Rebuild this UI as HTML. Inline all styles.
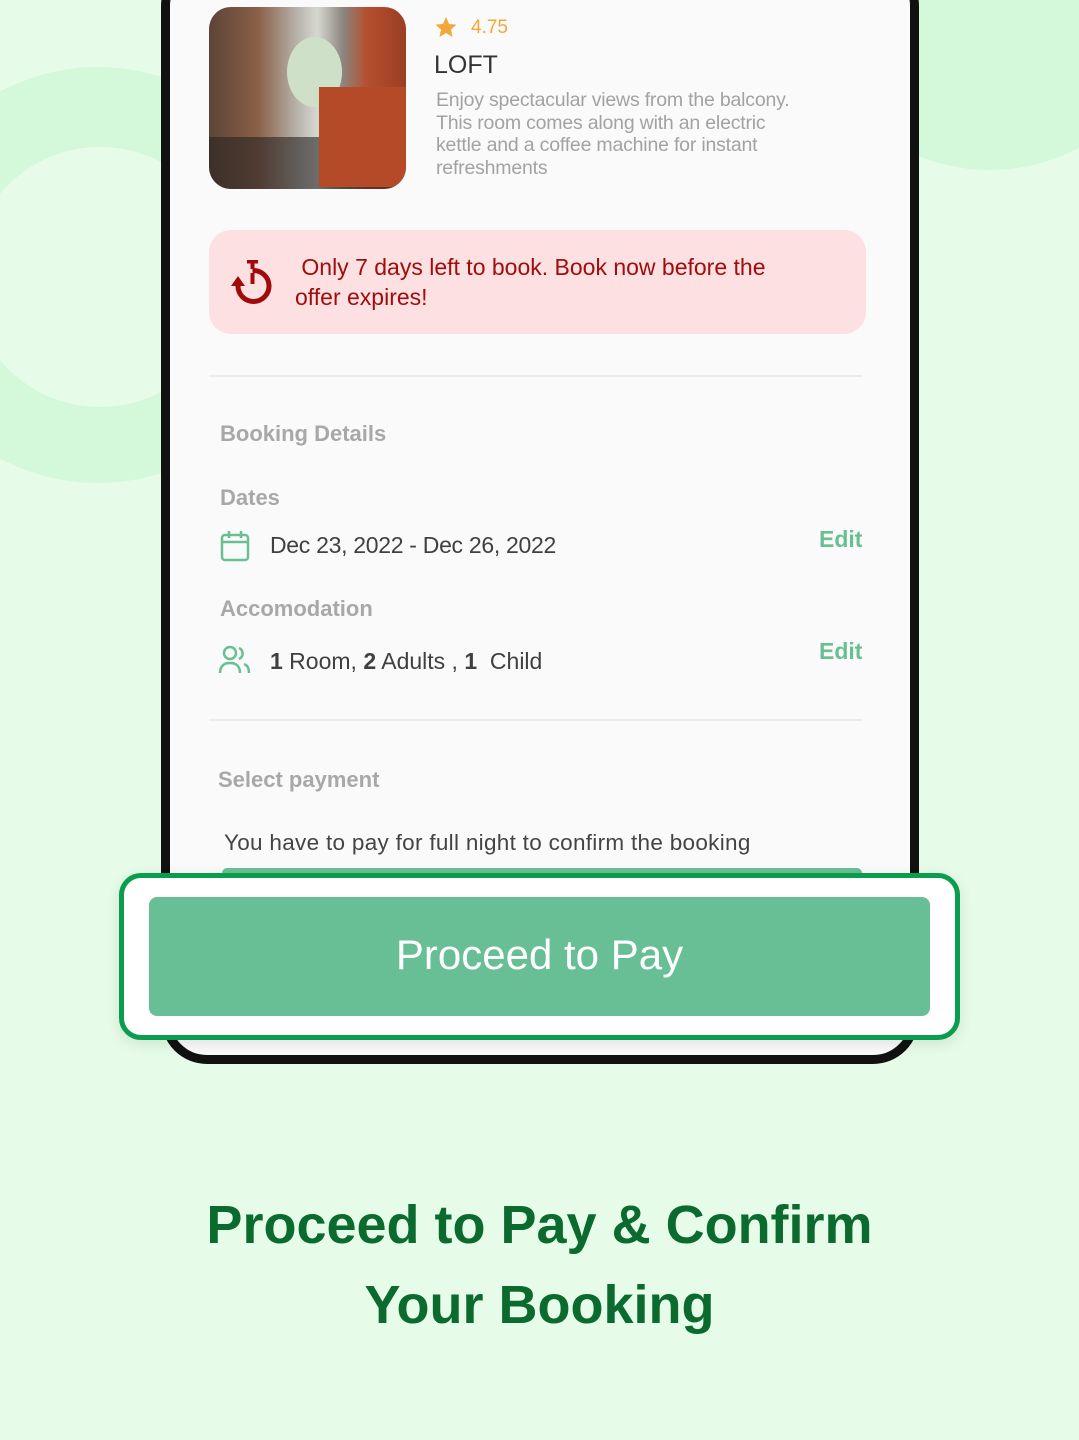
<!DOCTYPE html>
<html><head><meta charset="utf-8"><style>
*{margin:0;padding:0;box-sizing:border-box}
body{width:1079px;height:1440px;background:#e6fce9;position:relative;overflow:hidden;font-family:"Liberation Sans",sans-serif}
.a{position:absolute}
.t{position:absolute;white-space:nowrap}
</style></head><body>
<div class="a" style="left:-110px;top:67px;width:416px;height:416px;border-radius:50%;background:#d3f9da"></div>
<div class="a" style="left:-30px;top:147px;width:260px;height:260px;border-radius:50%;background:#e6fce9"></div>
<div class="a" style="left:800px;top:-210px;width:380px;height:380px;border-radius:50%;background:#d3f9da"></div>
<div class="a" style="left:161px;top:-40px;width:758px;height:1104px;border:9px solid #111;border-radius:46px;background:#fafafa"></div>

<div class="a" style="left:209px;top:7px;width:197px;height:182px;border-radius:22px;background:linear-gradient(90deg,#5c4436 0%,#8a6048 25%,#b8b4ad 45%,#d6d8d0 55%,#8b8580 68%,#b5502e 80%,#9b3e22 100%);overflow:hidden">
<div class="a" style="left:78px;top:30px;width:55px;height:70px;border-radius:50%;background:#cfe0c8"></div>
<div class="a" style="left:0;top:130px;width:197px;height:52px;background:rgba(40,35,35,.6)"></div>
<div class="a" style="left:110px;top:80px;width:87px;height:100px;background:#b54a28"></div>
</div>
<svg class="a" style="left:433px;top:16px" width="26" height="24" viewBox="0 0 24 24"><path d="M12 1l3.1 7 7.4.6-5.6 4.9 1.7 7.5L12 17l-6.6 4 1.7-7.5L1.5 8.6 8.9 8z" fill="#f1a73a"/></svg>
<div class="t" style="left:471px;top:17px;font-size:19px;color:#f1a73a">4.75</div>
<div class="t" style="left:434px;top:51px;font-size:25px;color:#333">LOFT</div>
<div class="a" style="left:436px;top:89px;font-size:19.5px;line-height:22.5px;color:#a2a2a2;width:440px;letter-spacing:-0.2px">Enjoy spectacular views from the balcony.<br>This room comes along with an electric<br>kettle and a coffee machine for instant<br>refreshments</div>

<div class="a" style="left:209px;top:230px;width:657px;height:104px;border-radius:22px;background:#fde0e2"></div>
<svg class="a" style="left:230px;top:258px" width="48" height="48" viewBox="0 0 48 48"><rect x="17" y="2" width="11" height="3.5" fill="#a20a0a"/><rect x="20.5" y="5" width="4" height="6" fill="#a20a0a"/><path d="M8 28 A15.5 15.5 0 1 0 22.5 12.5" stroke="#a20a0a" stroke-width="5" fill="none"/><path d="M1 28 L8 18 L15 28Z" fill="#a20a0a"/><path d="M22.5 15 V26" stroke="#a20a0a" stroke-width="4"/></svg>
<div class="a" style="left:295px;top:252px;font-size:23px;line-height:30px;color:#a00d0d">&nbsp;Only 7 days left to book. Book now before the<br>offer expires!</div>

<div class="a" style="left:209px;top:375px;width:653px;height:2px;background:#ececec"></div>
<div class="t" style="left:220px;top:421px;font-size:22px;color:#a8a8a8;font-weight:bold">Booking Details</div>
<div class="t" style="left:220px;top:485px;font-size:22px;color:#a8a8a8;font-weight:bold">Dates</div>
<svg class="a" style="left:219px;top:530px" width="32" height="32" viewBox="0 0 32 32" fill="none" stroke="#68bf91" stroke-width="2.5"><rect x="3" y="5" width="26" height="25" rx="3"/><path d="M3 12h26M10 1v7M22 1v7"/></svg>
<div class="t" style="left:270px;top:532px;font-size:23px;color:#404040;letter-spacing:-0.3px">Dec 23, 2022 - Dec 26, 2022</div>
<div class="t" style="left:819px;top:526px;font-size:23px;color:#68bf91;font-weight:bold">Edit</div>
<div class="t" style="left:220px;top:596px;font-size:22px;color:#a8a8a8;font-weight:bold">Accomodation</div>
<svg class="a" style="left:218px;top:645px" width="34" height="30" viewBox="0 0 34 30" fill="none" stroke="#68bf91" stroke-width="2.5"><circle cx="12" cy="8" r="6"/><path d="M2 28c0-7 4-10 10-10s10 3 10 10"/><path d="M21 3a6 6 0 0 1 0 11M26 19c3 1 5 4 5 9"/></svg>
<div class="t" style="left:270px;top:648px;font-size:23px;color:#404040"><b>1</b> Room, <b>2</b> Adults , <b>1</b>&nbsp; Child</div>
<div class="t" style="left:819px;top:638px;font-size:23px;color:#68bf91;font-weight:bold">Edit</div>

<div class="a" style="left:209px;top:719px;width:653px;height:2px;background:#ececec"></div>
<div class="t" style="left:218px;top:767px;font-size:22px;color:#a8a8a8;font-weight:bold">Select payment</div>
<div class="t" style="left:224px;top:830px;font-size:22.5px;color:#444;letter-spacing:0.3px">You have to pay for full night to confirm the booking</div>
<div class="a" style="left:222px;top:868px;width:640px;height:10px;border-radius:8px;background:#69bf95"></div>

<div class="a" style="left:119px;top:873px;width:841px;height:167px;border:5px solid #0a9d4e;border-radius:22px;background:#fff;box-shadow:0 4px 14px rgba(0,0,0,.1)"></div>
<div class="a" style="left:149px;top:897px;width:781px;height:119px;border-radius:8px;background:#69bf95;color:#fff;font-size:42px;text-align:center;line-height:115px">Proceed to Pay</div>

<div class="a" style="left:0;top:1185px;width:1079px;text-align:center;font-size:54px;line-height:80px;font-weight:bold;color:#0b6a2e">Proceed to Pay &amp; Confirm<br>Your Booking</div>
</body></html>
